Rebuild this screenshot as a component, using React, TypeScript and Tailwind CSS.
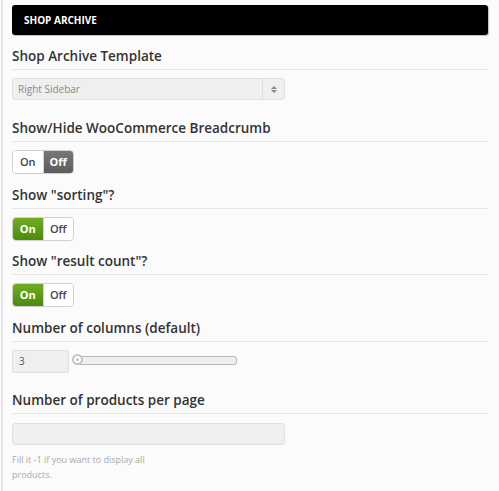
import { useState } from 'react';

function Toggle({ on }: { on: boolean }) {
    return (
        <div className="flex h-[24px] w-[62px] rounded-[4px] border border-[#cfcfcf] overflow-hidden text-[11px] font-semibold">
            <div className={`flex-1 flex items-center justify-center ${on ? 'bg-gradient-to-b from-[#72ad22] to-[#4d8a0c] text-white font-bold' : 'bg-white text-[#444]'}`}>
                On
            </div>
            <div className={`flex-1 flex items-center justify-center border-l border-[#d5d5d5] ${!on ? 'bg-gradient-to-b from-[#777] to-[#5c5c5c] text-white font-bold' : 'bg-white text-[#444]'}`}>
                Off
            </div>
        </div>
    );
}

function Title({ children, mt }: { children: React.ReactNode, mt: string }) {
    return (
        <div className={`${mt} text-[13.5px] leading-5 font-semibold text-[#333] pb-[3px] border-b border-[#e8e8e8]`}>
            {children}
        </div>
    );
}

export default function App() {
    const [cols] = useState('3');

    return (
        <div className="w-[499px] h-[491px] bg-[#fbfbfb] overflow-hidden" style={{ fontFamily: '"Open Sans", sans-serif' }}>
            <div className="ml-[1px] h-full border-l-2 border-[#e4e4e4] pl-[9px]">
                <div className="w-[476px] pt-[5px]">
                    <div className="h-[30px] bg-black rounded-[3px] shadow-[1px_1px_1px_rgba(0,0,0,0.25)] flex items-center pl-3 text-white text-[10px] font-bold uppercase">
                        Shop Archive
                    </div>

                    <Title mt="mt-[11px]">Shop Archive Template</Title>
                    <div className="mt-2 w-[273px] h-[22px] flex items-center rounded-[3px] border border-[#e0e0e0] bg-[#efefef] text-[10px] text-[#8a8a8a]">
                        <div className="flex-1 pl-[5px]">Right Sidebar</div>
                        <div className="w-[22px] h-full border-l border-[#e0e0e0] flex flex-col items-center justify-center gap-[1px]">
                            <svg width="6" height="3" viewBox="0 0 6 3"><path d="M0 3 L3 0 L6 3 Z" fill="#888" /></svg>
                            <svg width="6" height="3" viewBox="0 0 6 3"><path d="M0 0 L3 3 L6 0 Z" fill="#888" /></svg>
                        </div>
                    </div>

                    <Title mt="mt-[18px]">Show/Hide WooCommerce Breadcrumb</Title>
                    <div className="mt-2"><Toggle on={false} /></div>

                    <Title mt="mt-[11px]">Show "sorting"?</Title>
                    <div className="mt-2"><Toggle on={true} /></div>

                    <Title mt="mt-[10px]">Show "result count"?</Title>
                    <div className="mt-2"><Toggle on={true} /></div>

                    <Title mt="mt-[11px]">Number of columns (default)</Title>
                    <div className="mt-2 flex items-center">
                        <div className="w-[57px] h-[23px] flex items-center pl-[6px] rounded-[2px] border border-[#e0e0e0] bg-[#efefef] text-[10px] text-[#555]">
                            {cols}
                        </div>
                        <div className="relative ml-[5px] w-[163px] h-[9px] mb-[3px] rounded-[3px] border border-[#b8b8b8] bg-[#eeeeee]">
                            {/* slider handle */}
                            <div className="absolute left-[-3px] top-[-3px] w-[11px] h-[11px] rounded-full border-2 border-[#c4c4c4] bg-white flex items-center justify-center">
                                <div className="w-[3px] h-[3px] rounded-full bg-[#c4c4c4]" />
                            </div>
                        </div>
                    </div>

                    <Title mt="mt-[17px]">Number of products per page</Title>
                    <div className="mt-[9px] w-[273px] h-[22px] rounded-[3px] border border-[#e0e0e0] bg-[#efefef]" />
                    <div className="mt-[7px] w-[150px] text-[9px] leading-[15px] text-[#aaa]">
                        Fill it -1 if you want to display all products.
                    </div>
                </div>
            </div>
        </div>
    );
}
